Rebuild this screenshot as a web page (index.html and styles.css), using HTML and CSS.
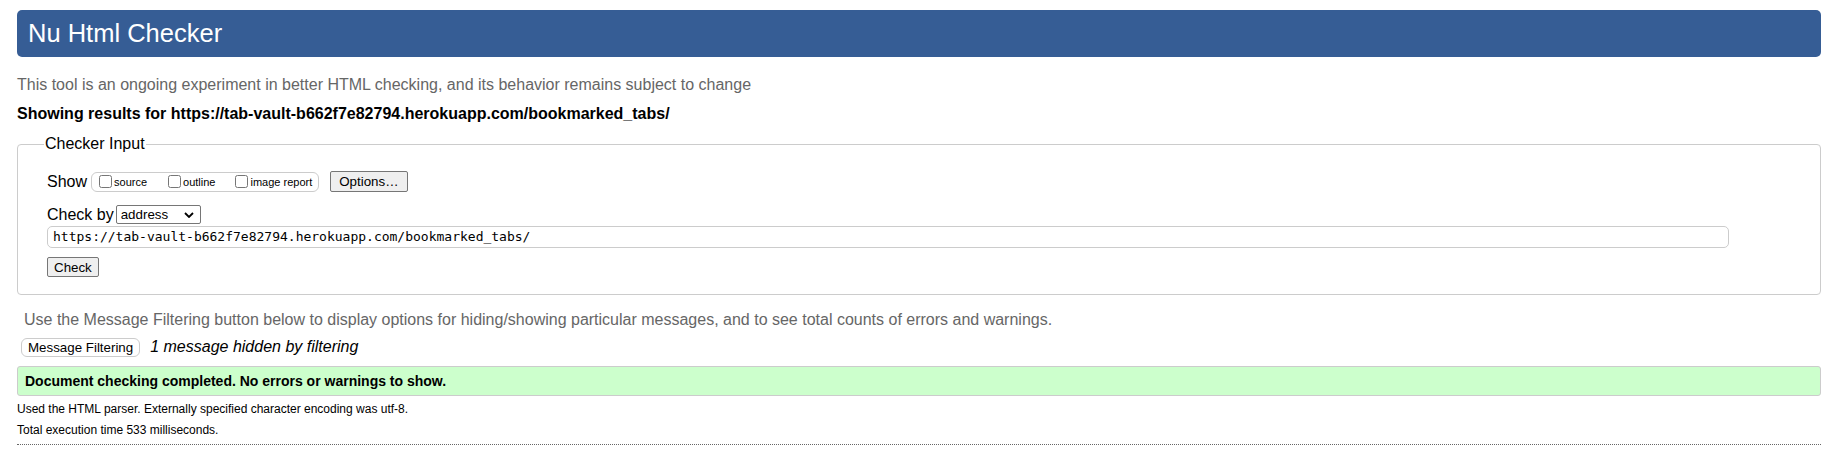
FILE: index.html
```html
<!DOCTYPE html>
<html lang="en">
<head>
<meta charset="utf-8">
<title>Nu Html Checker</title>
<link rel="stylesheet" href="styles.css">
</head>
<body>
<h1 class="title">Nu Html Checker</h1>
<p class="intro">This tool is an ongoing experiment in better HTML checking, and its behavior remains subject to change</p>
<p class="results-for">Showing results for https://tab-vault-b662f7e82794.herokuapp.com/bookmarked_tabs/</p>
<fieldset class="checker">
  <legend class="legend">Checker Input</legend>
  <div class="row show-row">
    <span class="label">Show</span>
    <span class="opts">
      <label class="opt opt-source"><input type="checkbox" class="cb"><span>source</span></label>
      <label class="opt opt-outline"><input type="checkbox" class="cb"><span>outline</span></label>
      <label class="opt"><input type="checkbox" class="cb"><span>image report</span></label>
    </span>
    <button class="btn btn-options" type="button">Options…</button>
  </div>
  <div class="row checkby-row">
    <span class="label label-checkby">Check by</span>
    <span class="select">address<svg class="chev" viewBox="0 0 10 6" width="10" height="6"><path d="M1 1 L5 5 L9 1" fill="none" stroke="#000" stroke-width="1.8"/></svg></span>
  </div>
  <div class="url">https://tab-vault-b662f7e82794.herokuapp.com/bookmarked_tabs/</div>
  <button class="btn btn-check" type="button">Check</button>
</fieldset>
<p class="filter-note">Use the Message Filtering button below to display options for hiding/showing particular messages, and to see total counts of errors and warnings.</p>
<div class="filter-row">
  <button class="btn btn-filter" type="button">Message Filtering</button>
  <span class="hidden-note">1 message hidden by filtering</span>
</div>
<div class="success">Document checking completed. No errors or warnings to show.</div>
<p class="small">Used the HTML parser. Externally specified character encoding was utf-8.</p>
<p class="small">Total execution time 533 milliseconds.</p>
<hr class="rule">
</body>
</html>
```

FILE: styles.css
```css
html, body {
  margin: 0;
  background: #fff;
}
body {
  padding: 10px 27px 20px 17px;
  font-family: "Liberation Sans", Arial, sans-serif;
  color: #000;
}
.title {
  margin: 0;
  height: 47px;
  box-sizing: border-box;
  padding: 0 11px;
  background: #365d95;
  color: #fff;
  border-radius: 5px;
  font-weight: normal;
  font-size: 25.5px;
  line-height: 47px;
}
.intro {
  margin: 19px 0 0 0;
  font-size: 16px;
  line-height: 18px;
  color: #666;
}
.results-for {
  margin: 11px 0 0 0;
  font-size: 16px;
  line-height: 18px;
  font-weight: bold;
}
.checker {
  margin: 12px 0 0 0;
  border: 1px solid #ccc;
  border-radius: 4px;
  padding: 10px 20px 17px 29px;
  min-width: 0;
}
.legend {
  padding: 0 1px;
  margin-left: -3px;
  font-size: 16px;
  color: #000;
}
.row {
  display: flex;
  align-items: center;
}
.label {
  font-size: 16px;
  margin-right: 4px;
}
.label-checkby {
  margin-right: 2px;
}
.show-row {
  margin-top: 8px;
  height: 21px;
}
.opts {
  display: flex;
  align-items: center;
  box-sizing: border-box;
  height: 20px;
  border: 1px solid #ccc;
  border-radius: 6px;
  padding: 0 6px 0 7px;
}
.opt {
  display: flex;
  align-items: center;
  font-size: 11px;
}
.opt-source { margin-right: 21px; }
.opt-outline { margin-right: 20px; }
.cb {
  margin: 0 2px 0 0;
  width: 13px;
  height: 13px;
}
.btn {
  font-family: "Liberation Sans", Arial, sans-serif;
  font-size: 13.33px;
  color: #000;
  background: #efefef;
  border: 1px solid #767676;
  border-radius: 2px;
  padding: 0 6px;
}
.btn-options {
  margin-left: 11px;
  height: 21px;
  padding: 0 8px;
}
.checkby-row {
  margin-top: 13px;
  height: 19px;
}
.select {
  display: flex;
  align-items: center;
  justify-content: space-between;
  box-sizing: border-box;
  width: 85px;
  height: 19px;
  border: 1px solid #767676;
  border-radius: 2px;
  padding: 0 6px 0 4px;
  font-size: 13.33px;
}
.chev { display: block; }
.url {
  margin-top: 2px;
  box-sizing: border-box;
  width: 1682px;
  height: 22px;
  border: 1px solid #ccc;
  border-radius: 5px;
  padding: 0 5px;
  font-family: "DejaVu Sans Mono", "Liberation Mono", monospace;
  font-size: 13px;
  letter-spacing: 0;
  line-height: 20px;
}
.btn-check {
  display: block;
  margin-top: 9px;
  height: 20px;
}
.filter-note {
  margin: 16px 0 0 7px;
  font-size: 16px;
  line-height: 18px;
  color: #666;
}
.filter-row {
  display: flex;
  align-items: center;
  margin: 8px 0 0 4px;
  height: 20px;
}
.btn-filter {
  height: 19px;
  background: #fff;
  border: 1px solid #ccc;
  border-radius: 6px;
}
.hidden-note {
  margin-left: 10px;
  font-style: italic;
  font-size: 16px;
}
.success {
  margin-top: 9px;
  box-sizing: border-box;
  height: 30px;
  border: 1px solid #ccc;
  border-radius: 3px;
  background: #ccffcc;
  padding: 0 7px;
  font-weight: bold;
  font-size: 14px;
  line-height: 28px;
}
.small {
  margin: 6px 0 0 0;
  font-size: 12px;
  line-height: 14px;
}
.small + .small {
  margin-top: 7px;
}
.rule {
  margin: 7px 0 0 0;
  border: 0;
  border-top: 1px dotted #666;
  height: 0;
}
```
